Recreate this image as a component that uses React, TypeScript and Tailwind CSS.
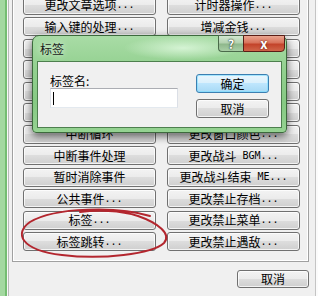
import React from "react";

const LEFT = [
  "更改文章选项...",
  "输入键的处理...",
  "开关操作...",
  "变量操作...",
  "条件分歧...",
  "循环",
  "中断循环",
  "中断事件处理",
  "暂时消除事件",
  "公共事件...",
  "标签...",
  "标签跳转...",
];

const RIGHT = [
  "计时器操作...",
  "增减金钱...",
  "增减物品...",
  "增减武器...",
  "增减防具...",
  "替换队员...",
  "更改窗口颜色...",
  "更改战斗 BGM...",
  "更改战斗结束 ME...",
  "更改禁止存档...",
  "更改禁止菜单...",
  "更改禁止遇敌...",
];

function Label({ text }: { text: string }) {
  const parts = text.split(/([A-Za-z. ]+)/).filter((p) => p.length > 0);
  return (
    <>
      {parts.map((p, i) =>
        /^[A-Za-z. ]+$/.test(p) ? (
          <span key={i} className="font-['DejaVu_Sans_Mono',monospace] text-[10px] whitespace-pre">
            {p}
          </span>
        ) : (
          <span key={i}>{p}</span>
        )
      )}
    </>
  );
}

function WinButton({ text, className = "" }: { text: string; className?: string }) {
  return (
    <div
      className={
        "flex items-center justify-center rounded-[3px] border border-[#707070] bg-[linear-gradient(#f3f3f3_0%,#ebebeb_50%,#dddddd_50%,#cfcfcf_100%)] shadow-[inset_0_0_0_1px_rgba(255,255,255,0.75)] text-[12px] leading-none text-black " +
        className
      }
    >
      <Label text={text} />
    </div>
  );
}

export default function App() {
  return (
    <div className="relative w-[318px] h-[296px] overflow-hidden bg-[#f0f0f0] flex font-['Noto_Sans_CJK_SC','Noto_Sans',sans-serif]">
      {/* left window frame */}
      <div className="flex h-full">
        <div className="w-[5px] bg-[#a3d8a0]" />
        <div className="w-[2px] bg-[#74bd71]" />
        <div className="w-[1px] bg-[#f8f8f8]" />
        <div className="w-[1px] bg-[#b9b9b9]" />
      </div>

      {/* content */}
      <div className="flex-1 flex flex-col">
        <div className="ml-[3px] mr-[6px] border-x border-b border-[#a0a0a0] shadow-[inset_1px_0_0_#fff,inset_-1px_-1px_0_#fff] pl-[10px] pr-[8px] pb-[10px]">
          <div className="-mt-[4.5px] flex gap-[11px]">
            <div className="w-[133px] flex flex-col gap-[2.5px]">
              {LEFT.map((t) => (
                <WinButton key={t} text={t} className="h-[19px]" />
              ))}
            </div>
            <div className="w-[133px] flex flex-col gap-[2.5px]">
              {RIGHT.map((t) => (
                <WinButton key={t} text={t} className="h-[19px]" />
              ))}
            </div>
          </div>
        </div>
        <div className="mt-[8px] flex justify-end mr-[6px]">
          <WinButton text="取消" className="w-[72px] h-[18px]" />
        </div>
      </div>

      {/* right frame */}
      <div className="flex h-full">
        <div className="w-[1px] bg-[#c4c4c4]" />
        <div className="w-[2px] bg-[#fbfbfb]" />
      </div>

      {/* dialog */}
      <div className="absolute left-[32px] top-[35px] w-[255px] h-[98px] rounded-t-[7px] rounded-b-[4px] border border-[#3d6a3d] bg-[linear-gradient(180deg,#a9dca6_0%,#92d08f_35%,#86c983_70%,#95d392_100%)] shadow-[0_3px_9px_rgba(0,0,0,0.6)] flex flex-col px-[4px] pb-[4px]">
        <div className="pointer-events-none absolute left-[90px] top-[0px] w-[120px] h-[24px] rounded-full bg-[radial-gradient(ellipse_at_center,rgba(235,255,235,0.7)_0%,rgba(235,255,235,0)_70%)]" />
        <div className="relative h-[25px] flex items-start">
          <div className="pl-[3px] h-[25px] flex items-center text-[12px] text-[#1a1a1a] [text-shadow:0_0_6px_rgba(255,255,255,0.9)]">
            标签
          </div>
          <div className="ml-auto -mt-[1px] -mr-[3px] flex">
            <div className="w-[25px] h-[17px] rounded-bl-[4px] border border-[#4a6a4a] border-r-0 bg-[linear-gradient(180deg,#d3e8d1_0%,#b3d2b0_45%,#8fb88c_55%,#a9cfa6_100%)] flex items-center justify-center text-[12px] font-bold leading-none text-white [text-shadow:0_0_2px_#223322,0_0_1px_#223322]">
              ?
            </div>
            <div className="w-[42px] h-[17px] rounded-br-[4px] border border-[#5a1e16] bg-[linear-gradient(180deg,#eaa590_0%,#d8735b_45%,#c3432a_55%,#d0664a_100%)] flex items-center justify-center text-[13px] font-bold leading-none text-white [text-shadow:0_0_2px_#4a1008]">
              x
            </div>
          </div>
        </div>
        <div className="relative flex-1 bg-[#f0f0f0] border border-[#4d7f4e] flex px-[12px] pt-[12px]">
          <div className="w-[131px] flex flex-col">
            <div className="h-[14px] text-[12px] leading-[14px] text-black">标签名:</div>
            <div className="mt-0 h-[20px] border border-[#abadb3] border-b-[#e3e9ef] border-x-[#dbdfe6] bg-white flex items-center pl-[2px]">
              <div className="w-[1px] h-[13px] bg-black" />
            </div>
          </div>
          <div className="ml-[18px] flex flex-col gap-[6px]">
            <div className="w-[73px] h-[19px] rounded-[3px] border border-[#3c7fb1] bg-[linear-gradient(#eaf6fd_0%,#d9f0fc_50%,#bee6fd_50%,#a7d9f5_100%)] shadow-[inset_0_0_0_1px_rgba(120,220,255,0.6)] flex items-center justify-center text-[12px] leading-none text-black">
              确定
            </div>
            <WinButton text="取消" className="w-[73px] h-[19px]" />
          </div>
        </div>
      </div>

      {/* red hand-drawn ellipse */}
      <svg className="pointer-events-none absolute left-0 top-0" width="318" height="296" viewBox="0 0 318 296">
        <path
          d="M 150 216 C 118 206, 55 207, 30 222 C 14 233, 20 250, 62 255 C 102 260, 152 254, 164 243 C 172 234, 158 223, 138 216 C 120 210, 96 210, 80 212"
          fill="none"
          stroke="#b3262e"
          strokeWidth="2"
          strokeLinecap="round"
        />
      </svg>
    </div>
  );
}
